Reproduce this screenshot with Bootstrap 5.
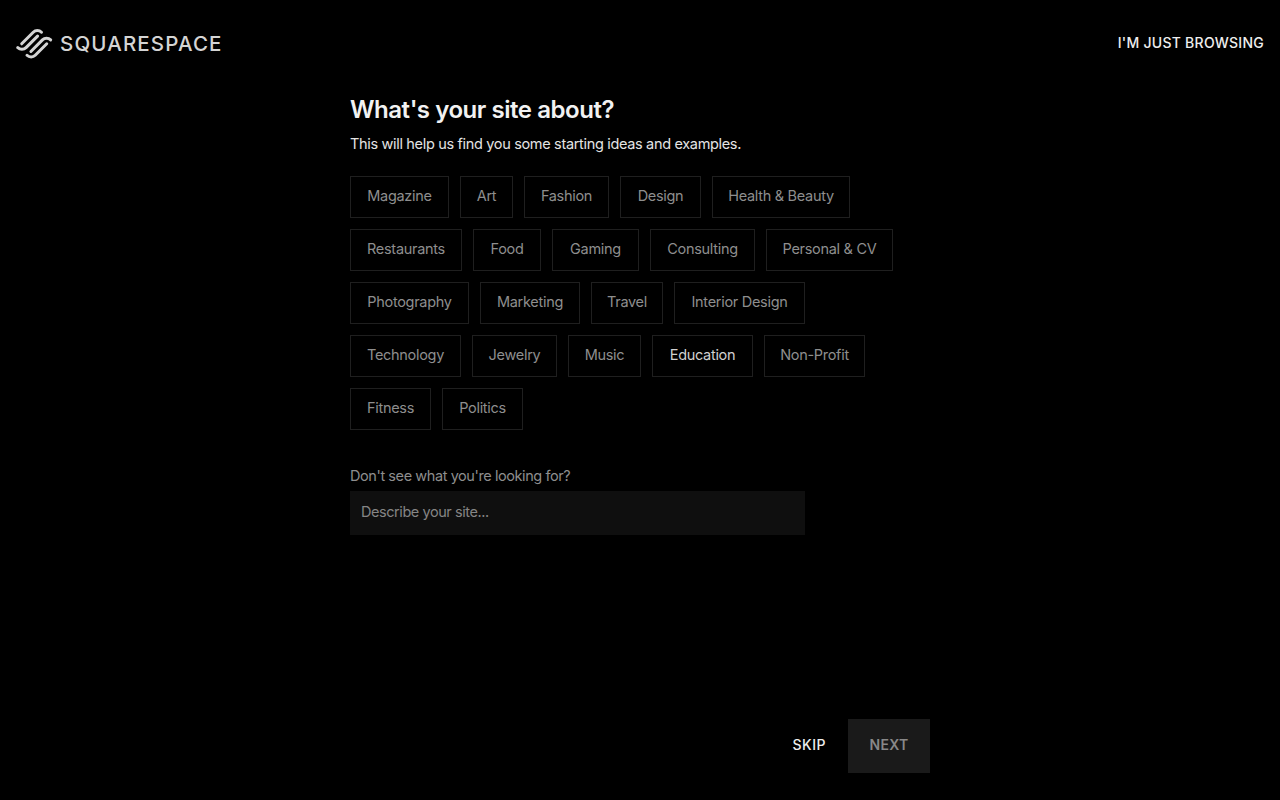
<!DOCTYPE html>
<html lang="en">
<head>
<meta charset="utf-8">
<title>Squarespace</title>
<link href="https://cdn.jsdelivr.net/npm/bootstrap@5.3.0/dist/css/bootstrap.min.css" rel="stylesheet">
<style>
html,body{height:100%;background:#000;}
body{font-family:Inter,"Liberation Sans",sans-serif;color:#fff;overflow:hidden;}
.shell{height:800px;}
.topbar{height:87px;padding:0 16px;}
.brand-mark{width:37px;height:30px;}
.brand-word{font-size:20.5px;letter-spacing:1.15px;color:#d4d4d4;font-weight:500;line-height:1;margin-left:7px;padding-top:2px;}
.browse-link{font-size:14px;font-weight:500;letter-spacing:.26px;color:#eee;text-decoration:none;padding-bottom:2px;}
.content-col{width:580px;margin-left:350px;}
.page-title{font-size:24px;font-weight:600;line-height:32px;color:#f2f2f2;margin:7px 0 0;letter-spacing:-.45px;}
.page-sub{font-size:14.5px;line-height:20px;color:#e4e4e4;margin:8px 0 0;letter-spacing:-.33px;}
.tag-wrap{margin-top:22px;row-gap:11px;}
.tag-line{column-gap:11px;}
.tag-btn{height:42px;padding:0 0 2px;background:#000;border:1px solid #1f1f1f;border-radius:0;color:#8e8e8e;font-size:14.5px;line-height:38px;letter-spacing:-.3px;}
.tag-btn.picked{color:#d0d0d0;}
.tw-53{width:53px}.tw-68{width:68px}.tw-72{width:72px}.tw-73{width:73px}.tw-81{width:81px}.tw-85{width:85px}.tw-87{width:87px}
.tw-99{width:99px}.tw-100{width:100px}.tw-101{width:101px}.tw-105{width:105px}.tw-111{width:111px}.tw-112{width:112px}
.tw-119{width:119px}.tw-127{width:127px}.tw-131{width:131px}.tw-138{width:138px}
.other-label{font-size:14.5px;line-height:20px;color:#8e8e8e;margin:36px 0 0;letter-spacing:-.42px;}
.other-input{display:block;width:455px;height:44px;margin-top:5px;background:#0f0f0f;border:0;border-radius:0;padding:0 11px 4px;font-size:14.5px;color:#8e8e8e;letter-spacing:-.44px;}
.other-input::placeholder{color:#858585;opacity:1;}
.other-input:focus{outline:0;}
.action-row{width:580px;margin-left:350px;margin-top:184px;}
.skip-btn{font-size:14px;font-weight:500;letter-spacing:.5px;color:#eee;padding:0 0 3px;border:0;background:none;border-radius:0;margin-right:22px;}
.next-btn{width:82px;height:54px;background:#1a1a1a;border:0;border-radius:0;font-size:14px;font-weight:600;letter-spacing:.3px;color:#888;padding:0 0 3px;}
</style>
</head>
<body>
<div class="shell d-flex flex-column">
  <header class="topbar d-flex align-items-center justify-content-between">
    <a class="d-flex align-items-center text-decoration-none" href="#">
      <svg class="brand-mark" viewBox="0 2.45 23.4 19.1" fill="none" stroke="#d4d4d4" stroke-width="1.9" stroke-linecap="round" stroke-linejoin="round" aria-hidden="true">
        <path d="M22 9.4A3.7 3.7 0 0 0 16.76 9.4L9.4 16.76"/>
        <path d="M19.5 11.85L12.16 19.2A3.7 3.7 0 0 1 6.92 19.2"/>
        <path d="M16.15 4.5A3.7 3.7 0 0 0 10.91 4.5L3.55 11.87"/>
        <path d="M13.65 6.97L6.31 14.32A3.7 3.7 0 0 1 1.07 14.32"/>
      </svg>
      <span class="brand-word">SQUARESPACE</span>
    </a>
    <a class="browse-link" href="#">I'M JUST BROWSING</a>
  </header>
  <main class="content-col">
    <h1 class="page-title">What's your site about?</h1>
    <p class="page-sub">This will help us find you some starting ideas and examples.</p>
    <div class="tag-wrap d-flex flex-column">
      <div class="tag-line d-flex">
        <button class="btn tag-btn tw-99">Magazine</button>
        <button class="btn tag-btn tw-53">Art</button>
        <button class="btn tag-btn tw-85">Fashion</button>
        <button class="btn tag-btn tw-81">Design</button>
        <button class="btn tag-btn tw-138">Health &amp; Beauty</button>
      </div>
      <div class="tag-line d-flex">
        <button class="btn tag-btn tw-112">Restaurants</button>
        <button class="btn tag-btn tw-68">Food</button>
        <button class="btn tag-btn tw-87">Gaming</button>
        <button class="btn tag-btn tw-105">Consulting</button>
        <button class="btn tag-btn tw-127">Personal &amp; CV</button>
      </div>
      <div class="tag-line d-flex">
        <button class="btn tag-btn tw-119">Photography</button>
        <button class="btn tag-btn tw-100">Marketing</button>
        <button class="btn tag-btn tw-72">Travel</button>
        <button class="btn tag-btn tw-131">Interior Design</button>
      </div>
      <div class="tag-line d-flex">
        <button class="btn tag-btn tw-111">Technology</button>
        <button class="btn tag-btn tw-85">Jewelry</button>
        <button class="btn tag-btn tw-73">Music</button>
        <button class="btn tag-btn picked tw-101">Education</button>
        <button class="btn tag-btn tw-101">Non-Profit</button>
      </div>
      <div class="tag-line d-flex">
        <button class="btn tag-btn tw-81">Fitness</button>
        <button class="btn tag-btn tw-81">Politics</button>
      </div>
    </div>
    <p class="other-label">Don't see what you're looking for?</p>
    <input class="other-input" type="text" placeholder="Describe your site...">
  </main>
  <div class="action-row d-flex align-items-center justify-content-end">
    <button class="btn skip-btn">SKIP</button>
    <button class="btn next-btn">NEXT</button>
  </div>
</div>
</body>
</html>
